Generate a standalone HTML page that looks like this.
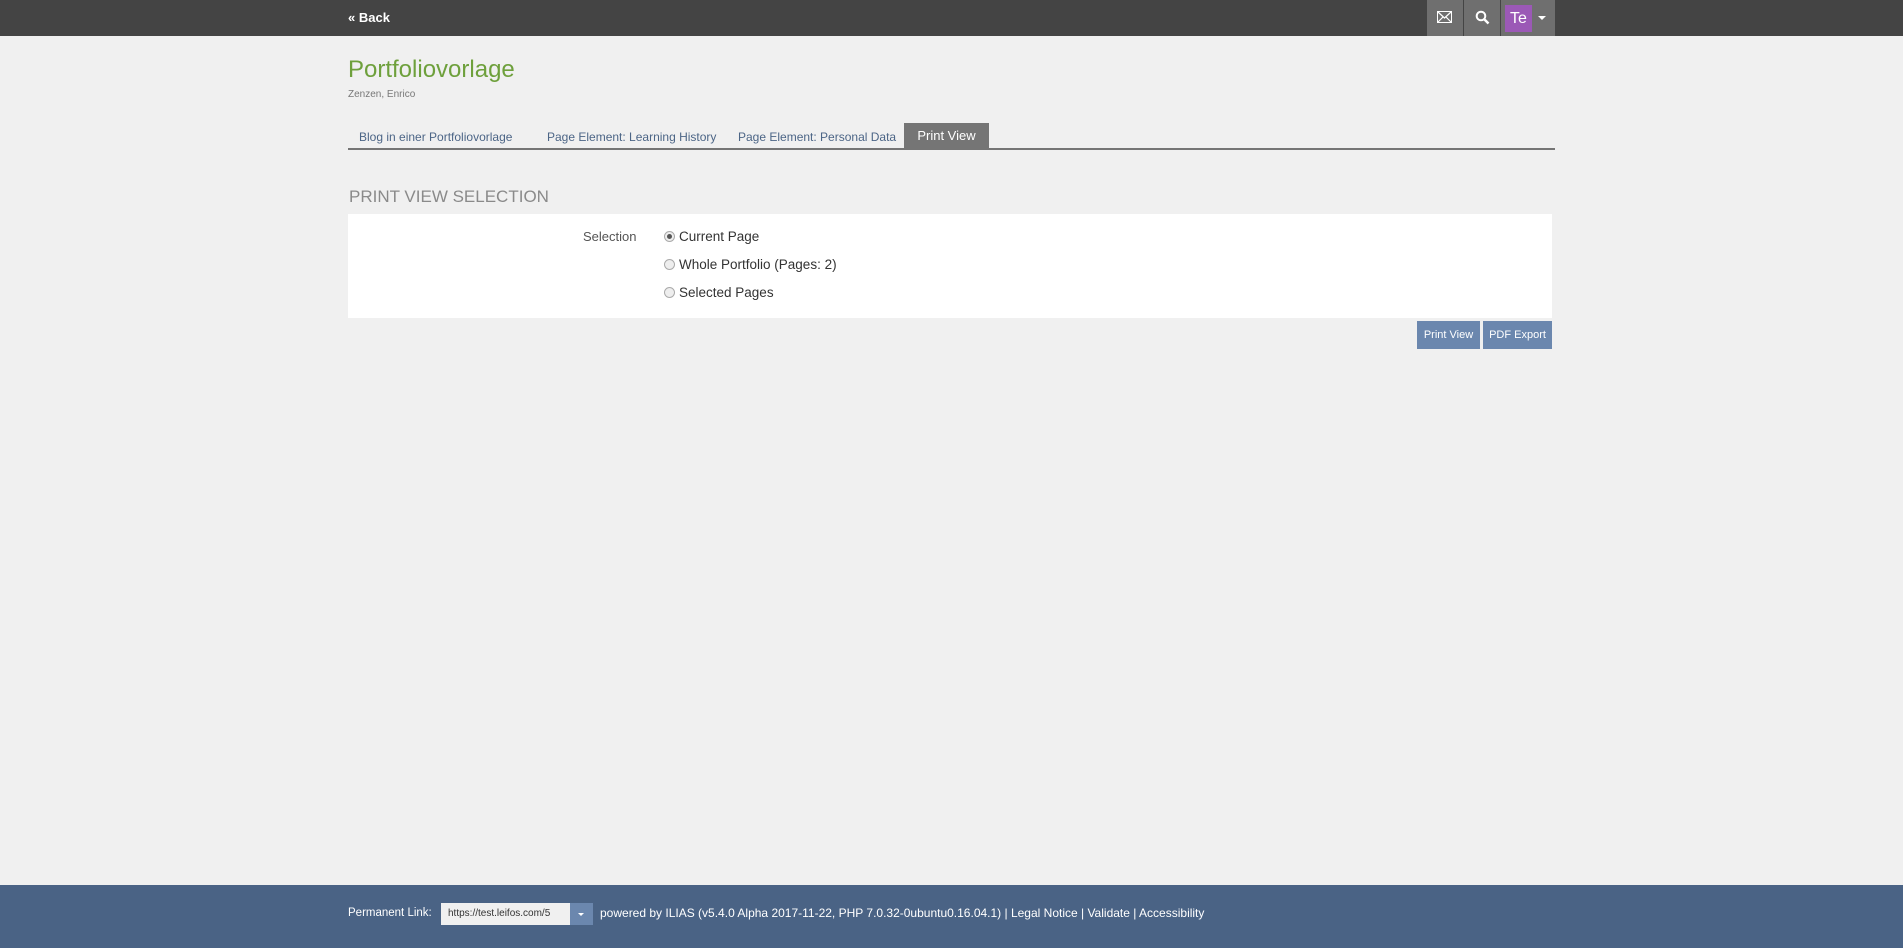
<!DOCTYPE html>
<html><head><meta charset="utf-8"><style>
*{margin:0;padding:0;box-sizing:border-box}
body{width:1903px;height:948px;background:#f0f0f0;font-family:"Liberation Sans",sans-serif;position:relative;overflow:hidden;color:#161616}
.abs{position:absolute;white-space:nowrap}
#top{position:absolute;left:0;top:0;width:1903px;height:36px;background:#444}
.tb{position:absolute;top:0;height:36px;background:#6f6f6f}
</style></head><body>
<div id="top"></div>
<div class="abs" style="left:348px;top:10px;color:#fff;font-weight:bold;font-size:13px">« Back</div>
<div class="tb" style="left:1427px;width:36px"></div>
<div class="tb" style="left:1464px;width:36px"></div>
<div class="tb" style="left:1501px;width:54px"></div>
<svg class="abs" style="left:1437px;top:11px" width="15" height="12" viewBox="0 0 15 12"><rect x="0.5" y="0.5" width="14" height="11" fill="none" stroke="#fff"/><path d="M1 1 L7.5 7 L14 1 M1 11 L6 6 M14 11 L9 6" stroke="#fff" fill="none" stroke-width="1.2"/></svg>
<svg class="abs" style="left:1475px;top:10px" width="15" height="15" viewBox="0 0 15 15"><circle cx="6" cy="6" r="4.3" fill="none" stroke="#fff" stroke-width="2"/><path d="M9 9 L13.5 13.5" stroke="#fff" stroke-width="2.5"/></svg>
<div class="abs" style="left:1505px;top:5px;width:27px;height:27px;background:#9b59b6;color:#fff;font-size:16px;line-height:27px;text-align:center">Te</div>
<div class="abs" style="left:1538px;top:16px;width:0;height:0;border-left:4px solid transparent;border-right:4px solid transparent;border-top:4px solid #fff"></div>

<div class="abs" style="left:348px;top:56px;color:#6ea03c;font-size:24px">Portfoliovorlage</div>
<div class="abs" style="left:348px;top:89px;color:#777;font-size:10px">Zenzen, Enrico</div>

<div class="abs" style="left:359px;top:130px;color:#4c6586;font-size:12px">Blog in einer Portfoliovorlage</div>
<div class="abs" style="left:547px;top:130px;color:#4c6586;font-size:12px">Page Element: Learning History</div>
<div class="abs" style="left:738px;top:130px;color:#4c6586;font-size:12px">Page Element: Personal Data</div>
<div class="abs" style="left:904px;top:123px;width:85px;height:25px;background:#757575;color:#fff;font-size:13px;line-height:25px;text-align:center">Print View</div>
<div class="abs" style="left:348px;top:148px;width:1207px;height:2px;background:#757575"></div>

<div class="abs" style="left:349px;top:187px;color:#8a8a8a;font-size:17px">PRINT VIEW SELECTION</div>
<div class="abs" style="left:348px;top:214px;width:1204px;height:104px;background:#fff"></div>
<div class="abs" style="left:583px;top:229px;color:#555;font-size:13px">Selection</div>
<div class="abs" style="left:664px;top:231px;width:11px;height:11px;border-radius:50%;border:1px solid #aaa;background:#eee"><div style="margin:2px;width:5px;height:5px;border-radius:50%;background:#555"></div></div>
<div class="abs" style="left:679px;top:229px;color:#333;font-size:13.5px">Current Page</div>
<div class="abs" style="left:664px;top:259px;width:11px;height:11px;border-radius:50%;border:1px solid #aaa;background:#eee"></div>
<div class="abs" style="left:679px;top:257px;color:#333;font-size:13.5px">Whole Portfolio (Pages: 2)</div>
<div class="abs" style="left:664px;top:287px;width:11px;height:11px;border-radius:50%;border:1px solid #aaa;background:#eee"></div>
<div class="abs" style="left:679px;top:285px;color:#333;font-size:13.5px">Selected Pages</div>

<div class="abs" style="left:1417px;top:321px;width:63px;height:28px;background:#6b87ae;color:#fff;font-size:11px;line-height:28px;text-align:center">Print View</div>
<div class="abs" style="left:1483px;top:321px;width:69px;height:28px;background:#6b87ae;color:#fff;font-size:11px;line-height:28px;text-align:center">PDF Export</div>

<div class="abs" style="left:0;top:885px;width:1903px;height:63px;background:#4a6385"></div>
<div class="abs" style="left:348px;top:907px;color:#fff;font-size:11.5px">Permanent Link:</div>
<div class="abs" style="left:441px;top:903px;width:129px;height:22px;background:#f0f0f0;color:#333;font-size:10px;line-height:22px;padding-left:7px">https://test.leifos.com/5</div>
<div class="abs" style="left:570px;top:903px;width:23px;height:22px;background:#6b87ae"></div>
<div class="abs" style="left:578px;top:913px;width:0;height:0;border-left:3.5px solid transparent;border-right:3.5px solid transparent;border-top:3.5px solid #fff"></div>
<div class="abs" style="left:600px;top:906px;color:#fff;font-size:12px">powered by ILIAS (v5.4.0 Alpha 2017-11-22, PHP 7.0.32-0ubuntu0.16.04.1) | Legal Notice | Validate | Accessibility</div>
</body></html>
